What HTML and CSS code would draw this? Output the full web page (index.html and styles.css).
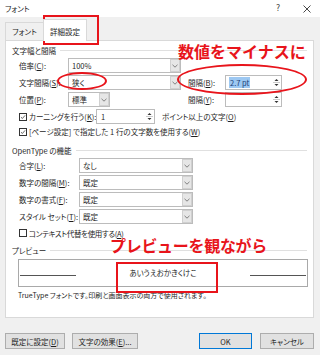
FILE: index.html
```html
<!DOCTYPE html>
<html lang="ja">
<head>
<meta charset="utf-8">
<link rel="stylesheet" href="styles.css">
</head>
<body>
<div class="titlebar">
  <span class="title">フォント</span>
  <span class="help">?</span>
  <span class="close"><svg width="8" height="8" viewBox="0 0 8 8"><path d="M0.5 0.5L7.5 7.5M7.5 0.5L0.5 7.5" stroke="#333" stroke-width="0.9"/></svg></span>
</div>
<div class="tabs">
  <div class="tab">フォント</div>
  <div class="tab active">詳細設定</div>
</div>
<div class="panel">
  <div class="group">文字幅と間隔</div>
  <div class="row">
    <span class="lbl w49">倍率(<u>C</u>):</span>
    <div class="combo w113"><span>100%</span><span class="drop"><svg width="6" height="4" viewBox="0 0 6 4"><path d="M0.5 0.8L3 3.2L5.5 0.8" fill="none" stroke="#666" stroke-width="0.8"/></svg></span></div>
  </div>
  <div class="row">
    <span class="lbl w49">文字間隔(<u>S</u>):</span>
    <div class="combo w113"><span>狭く</span><span class="drop"><svg width="6" height="4" viewBox="0 0 6 4"><path d="M0.5 0.8L3 3.2L5.5 0.8" fill="none" stroke="#666" stroke-width="0.8"/></svg></span></div>
    <span class="lbl2">間隔(<u>B</u>):</span>
    <div class="spin w57"><span class="sel">2.7 pt</span><span class="arrows"><svg width="9" height="13" viewBox="0 0 9 13"><path d="M2.5 5L4.5 3L6.5 5Z" fill="#333"/><path d="M1 6.5H8" stroke="#ccc" stroke-width="1"/><path d="M2.5 8L4.5 10L6.5 8Z" fill="#333"/></svg></span></div>
  </div>
  <div class="row">
    <span class="lbl w49">位置(<u>P</u>):</span>
    <div class="combo w42"><span>標準</span><span class="drop"><svg width="6" height="4" viewBox="0 0 6 4"><path d="M0.5 0.8L3 3.2L5.5 0.8" fill="none" stroke="#666" stroke-width="0.8"/></svg></span></div>
    <span class="lbl2 gap78">間隔(<u>Y</u>):</span>
    <div class="spin w57"><span></span><span class="arrows"><svg width="9" height="13" viewBox="0 0 9 13"><path d="M2.5 5L4.5 3L6.5 5Z" fill="#333"/><path d="M1 6.5H8" stroke="#ccc" stroke-width="1"/><path d="M2.5 8L4.5 10L6.5 8Z" fill="#333"/></svg></span></div>
  </div>
  <div class="row">
    <span class="cb"><svg width="8" height="8" viewBox="0 0 8 8"><path d="M1.3 4.2L3.2 6L6.8 1.8" fill="none" stroke="#222" stroke-width="0.9"/></svg></span>
    <span class="lbl w69">カーニングを行う(<u>K</u>):</span>
    <div class="spin w59"><span class="val">1</span><span class="arrows"><svg width="9" height="13" viewBox="0 0 9 13"><path d="M2.5 5L4.5 3L6.5 5Z" fill="#333"/><path d="M1 6.5H8" stroke="#ccc" stroke-width="1"/><path d="M2.5 8L4.5 10L6.5 8Z" fill="#333"/></svg></span></div>
    <span class="after">ポイント以上の文字(<u>O</u>)</span>
  </div>
  <div class="row short">
    <span class="cb"><svg width="8" height="8" viewBox="0 0 8 8"><path d="M1.3 4.2L3.2 6L6.8 1.8" fill="none" stroke="#222" stroke-width="0.9"/></svg></span>
    <span>[ページ設定] で指定した 1 行の文字数を使用する(<u>W</u>)</span>
  </div>
  <div class="group second">OpenType の機能</div>
  <div class="row">
    <span class="lbl w60">合字(<u>L</u>):</span>
    <div class="combo w114"><span>なし</span><span class="drop"><svg width="6" height="4" viewBox="0 0 6 4"><path d="M0.5 0.8L3 3.2L5.5 0.8" fill="none" stroke="#666" stroke-width="0.8"/></svg></span></div>
  </div>
  <div class="row">
    <span class="lbl w60">数字の間隔(<u>M</u>):</span>
    <div class="combo w114"><span>既定</span><span class="drop"><svg width="6" height="4" viewBox="0 0 6 4"><path d="M0.5 0.8L3 3.2L5.5 0.8" fill="none" stroke="#666" stroke-width="0.8"/></svg></span></div>
  </div>
  <div class="row">
    <span class="lbl w60">数字の書式(<u>F</u>):</span>
    <div class="combo w114"><span>既定</span><span class="drop"><svg width="6" height="4" viewBox="0 0 6 4"><path d="M0.5 0.8L3 3.2L5.5 0.8" fill="none" stroke="#666" stroke-width="0.8"/></svg></span></div>
  </div>
  <div class="row">
    <span class="lbl w60">スタイル セット(<u>T</u>):</span>
    <div class="combo w114"><span>既定</span><span class="drop"><svg width="6" height="4" viewBox="0 0 6 4"><path d="M0.5 0.8L3 3.2L5.5 0.8" fill="none" stroke="#666" stroke-width="0.8"/></svg></span></div>
  </div>
  <div class="row ctx">
    <span class="cb"></span>
    <span class="ctxtext">コンテキスト代替を使用する(<u>A</u>)</span>
  </div>
  <div class="group third">プレビュー</div>
  <div class="preview">
    <span class="pline"></span>
    <span class="ptext">あいうえおかきくけこ</span>
    <span class="pline"></span>
  </div>
  <div class="note">TrueType フォントです。印刷と画面表示の両方で使用されます。</div>
</div>
<div class="buttons">
  <div class="btn b1">既定に設定(<u>D</u>)</div>
  <div class="btn b2">文字の効果(<u>E</u>)...</div>
  <div class="btn ok">OK</div>
  <div class="btn cancel">キャンセル</div>
</div>

<div class="mark rect1"></div>
<div class="mark ell1"></div>
<div class="mark ell2"></div>
<div class="mark rect2"></div>
<div class="callout c1">数値をマイナスに</div>
<div class="callout c2">プレビューを観ながら</div>
</body>
</html>
```

FILE: styles.css
```css
html, body {
  margin: 0;
  padding: 0;
}
body {
  width: 320px;
  height: 355px;
  overflow: hidden;
  position: relative;
  background: #f0f0f0;
  font-family: "Noto Sans CJK JP", "Noto Sans", sans-serif;
  font-size: 7.5px;
  color: #1e1e1e;
  font-feature-settings: "palt";
}
u { text-decoration: underline; text-underline-offset: 1px; }

.titlebar {
  height: 17px;
  background: #fff;
  display: flex;
  align-items: center;
  padding-left: 5px;
  box-sizing: border-box;
}
.title { flex: 1; }
.help { width: 27px; padding-left: 2px; box-sizing: border-box; color: #444; font-size: 8px; font-family: "DejaVu Sans", sans-serif; }
.close { width: 19px; padding-left: 2px; box-sizing: border-box; display: flex; align-items: center; }

.tabs {
  height: 23px;
  display: flex;
  align-items: flex-end;
  padding-left: 5px;
}
.tab {
  width: 39px;
  height: 18px;
  box-sizing: border-box;
  border: 1px solid #d9d9d9;
  border-bottom: none;
  background: #f0f0f0;
  display: flex;
  align-items: center;
  justify-content: center;
}
.tab.active {
  width: 44px;
  height: 22px;
  margin-bottom: -1px;
  margin-left: -1px;
  background: #fff;
  position: relative;
  z-index: 1;
  padding-top: 1px;
}

.panel {
  margin-left: 5px;
  width: 309px;
  height: 278px;
  box-sizing: border-box;
  border: 1px solid #d9d9d9;
  background: #fff;
  padding: 2px 6px 0 6px;
}
.group {
  height: 14px;
  display: flex;
  align-items: center;
}
.group::after {
  content: "";
  flex: 1;
  border-top: 1px solid #e0e0e0;
  margin-left: 4px;
}
.group.second { margin-top: 5px; }
.group.third { margin-top: 2px; }

.row {
  height: 17px;
  display: flex;
  align-items: center;
  padding-left: 7px;
}
.row.short { height: 13px; }
.row.ctx { height: 16px; }
.ctxtext { line-height: 9px; letter-spacing: -0.35px; }

.lbl { flex: none; white-space: nowrap; }
.w49 { width: 49px; }
.w60 { width: 60px; }
.w69 { width: 67px; }
.lbl2 { margin-left: 7px; width: 37px; flex: none; }
.lbl2.gap78 { margin-left: 78px; }

.combo, .spin {
  height: 15px;
  box-sizing: border-box;
  border: 1px solid #bcbcbc;
  background: #fff;
  display: flex;
  align-items: center;
  justify-content: space-between;
  padding-left: 3px;
  flex: none;
}
.w113 { width: 113px; }
.w114 { width: 114px; }
.w42 { width: 42px; }
.w57 { width: 57px; }
.w59 { width: 59px; }
.drop {
  width: 10px;
  height: 13px;
  box-sizing: border-box;
  background: #e6e6e6;
  border: 1px solid #d0d0d0;
  display: flex;
  align-items: center;
  justify-content: center;
}
.arrows {
  width: 9px;
  height: 13px;
  display: flex;
}
.sel {
  background: #9dc8f2;
  color: #1b3f78;
  padding: 0 1px;
  line-height: 11px;
}
.val { padding-left: 1px; }

.cb {
  width: 8px;
  height: 8px;
  box-sizing: border-box;
  border: 1px solid #333;
  margin-right: 2px;
  flex: none;
  display: flex;
  align-items: center;
  justify-content: center;
}
.cb svg { display: block; }
.after { margin-left: 7px; white-space: nowrap; }

.preview {
  margin: 2px 0 0 6px;
  width: 290px;
  height: 28px;
  box-sizing: border-box;
  border: 1px solid #a9a9a9;
  display: flex;
  align-items: flex-start;
  padding: 0 1px;
}
.pline {
  width: 56px;
  height: 1px;
  background: #555;
  margin-top: 15px;
  flex: none;
}
.ptext {
  flex: 1;
  text-align: center;
  line-height: 25px;
}
.note {
  margin: 1px 0 0 6px;
  height: 14px;
  line-height: 14px;
  font-size: 7px;
  white-space: nowrap;
}

.buttons {
  display: flex;
  padding: 15px 0 0 5px;
}
.btn {
  height: 16px;
  box-sizing: border-box;
  border: 1px solid #adadad;
  background: #e1e1e1;
  display: flex;
  align-items: center;
  justify-content: center;
  flex: none;
}
.b1 { width: 60px; }
.b2 { width: 66px; margin-left: 7px; }
.ok { width: 53px; margin-left: 61px; border-color: #0078d7; }
.cancel { width: 54px; margin-left: 8px; }

.mark {
  position: absolute;
  box-sizing: border-box;
  border: 2px solid #e8141b;
}
.rect1 { left: 43px; top: 15px; width: 56px; height: 30px; }
.ell1 { left: 57px; top: 72px; width: 50px; height: 18px; border-radius: 50%; }
.ell2 { left: 177px; top: 64px; width: 130px; height: 31px; border-radius: 50%; }
.rect2 { left: 116px; top: 262px; width: 102px; height: 31px; }
.callout {
  position: absolute;
  color: #e8141b;
  font-weight: bold;
  font-size: 16px;
  line-height: 16px;
  white-space: nowrap;
  font-feature-settings: normal;
}
.c1 { left: 178px; top: 43px; }
.c2 { left: 110px; top: 237px; letter-spacing: -0.3px; }
```
